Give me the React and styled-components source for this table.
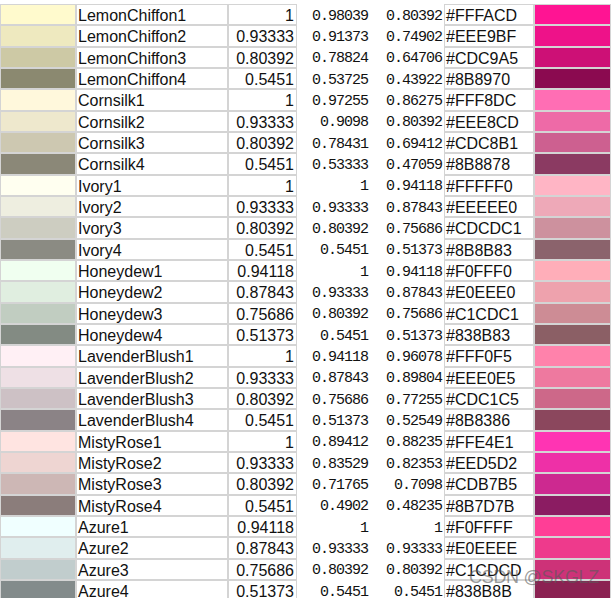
import styled, { createGlobalStyle } from "styled-components";

const rows = [
  ["LemonChiffon1", "1", "0.98039", "0.80392", "#FFFACD", "#FF1493"],
  ["LemonChiffon2", "0.93333", "0.91373", "0.74902", "#EEE9BF", "#EE1289"],
  ["LemonChiffon3", "0.80392", "0.78824", "0.64706", "#CDC9A5", "#CD1076"],
  ["LemonChiffon4", "0.5451", "0.53725", "0.43922", "#8B8970", "#8B0A50"],
  ["Cornsilk1", "1", "0.97255", "0.86275", "#FFF8DC", "#FF6EB4"],
  ["Cornsilk2", "0.93333", "0.9098", "0.80392", "#EEE8CD", "#EE6AA7"],
  ["Cornsilk3", "0.80392", "0.78431", "0.69412", "#CDC8B1", "#CD6090"],
  ["Cornsilk4", "0.5451", "0.53333", "0.47059", "#8B8878", "#8B3A62"],
  ["Ivory1", "1", "1", "0.94118", "#FFFFF0", "#FFB5C5"],
  ["Ivory2", "0.93333", "0.93333", "0.87843", "#EEEEE0", "#EEA9B8"],
  ["Ivory3", "0.80392", "0.80392", "0.75686", "#CDCDC1", "#CD919E"],
  ["Ivory4", "0.5451", "0.5451", "0.51373", "#8B8B83", "#8B636C"],
  ["Honeydew1", "0.94118", "1", "0.94118", "#F0FFF0", "#FFAEB9"],
  ["Honeydew2", "0.87843", "0.93333", "0.87843", "#E0EEE0", "#EEA2AD"],
  ["Honeydew3", "0.75686", "0.80392", "0.75686", "#C1CDC1", "#CD8C95"],
  ["Honeydew4", "0.51373", "0.5451", "0.51373", "#838B83", "#8B5F65"],
  ["LavenderBlush1", "1", "0.94118", "0.96078", "#FFF0F5", "#FF82AB"],
  ["LavenderBlush2", "0.93333", "0.87843", "0.89804", "#EEE0E5", "#EE799F"],
  ["LavenderBlush3", "0.80392", "0.75686", "0.77255", "#CDC1C5", "#CD6889"],
  ["LavenderBlush4", "0.5451", "0.51373", "0.52549", "#8B8386", "#8B475D"],
  ["MistyRose1", "1", "0.89412", "0.88235", "#FFE4E1", "#FF34B3"],
  ["MistyRose2", "0.93333", "0.83529", "0.82353", "#EED5D2", "#EE30A7"],
  ["MistyRose3", "0.80392", "0.71765", "0.7098", "#CDB7B5", "#CD2990"],
  ["MistyRose4", "0.5451", "0.4902", "0.48235", "#8B7D7B", "#8B1C62"],
  ["Azure1", "0.94118", "1", "1", "#F0FFFF", "#FF3E96"],
  ["Azure2", "0.87843", "0.93333", "0.93333", "#E0EEEE", "#EE3A8C"],
  ["Azure3", "0.75686", "0.80392", "0.80392", "#C1CDCD", "#CD3278"],
  ["Azure4", "0.51373", "0.5451", "0.5451", "#838B8B", "#8B2252"],
];

const App = () => {
  return (
    <Wrapper>
      <GlobalStyle />
      <Sheet>
        {rows.map(([name, r, g, b, hex, pink]) => (
          <Row key={name}>
            <Swatch color={hex} />
            <NameCell>{name}</NameCell>
            <NumCell>{r}</NumCell>
            <MonoCell>{g}</MonoCell>
            <MonoCell>{b}</MonoCell>
            <HexCell>{hex}</HexCell>
            <Swatch color={pink} />
          </Row>
        ))}
      </Sheet>
      <Watermark>CSDN @SKGLZ</Watermark>
    </Wrapper>
  );
};

const GlobalStyle = createGlobalStyle`
  body {
    margin: 0;
    background: #ffffff;
    overflow: hidden;
  }
`;

const Wrapper = styled.div`
  position: relative;
  width: 613px;
  height: 598px;
  overflow: hidden;
  background: #fff;
`;

const Sheet = styled.div`
  padding-top: 4px;
  display: flex;
  flex-direction: column;
`;

const Row = styled.div`
  display: grid;
  grid-template-columns: 76px 152px 69px 73px 74px 90px 77px;
  height: 21.33px;
  font-family: "Liberation Sans", Arial, sans-serif;
  font-size: 16px;
  color: #111;
`;

const Cell = styled.div`
  border: 1px solid #d4d4d4;
  display: flex;
  align-items: center;
  white-space: nowrap;
  overflow: hidden;
  line-height: 1;
  padding-top: 3px;
`;

const Swatch = styled(Cell)`
  background: ${(p) => p.color};
  padding-top: 0;
`;

const NameCell = styled(Cell)`
  padding-left: 1px;
`;

const NumCell = styled(Cell)`
  justify-content: flex-end;
  padding-right: 2px;
`;

const MonoCell = styled.div`
  display: flex;
  align-items: center;
  justify-content: flex-end;
  padding-right: 2px;
  padding-top: 3px;
  line-height: 1;
  font-family: "Liberation Mono", "DejaVu Sans Mono", monospace;
  font-size: 15px;
  letter-spacing: -1px;
  color: #111;
`;

const HexCell = styled(Cell)`
  padding-left: 1px;
`;

const Watermark = styled.div`
  position: absolute;
  left: 469px;
  top: 567px;
  font-family: "Liberation Sans", Arial, sans-serif;
  font-size: 18px;
  color: rgba(90, 90, 90, 0.6);
  letter-spacing: -0.3px;
`;

export default App;
